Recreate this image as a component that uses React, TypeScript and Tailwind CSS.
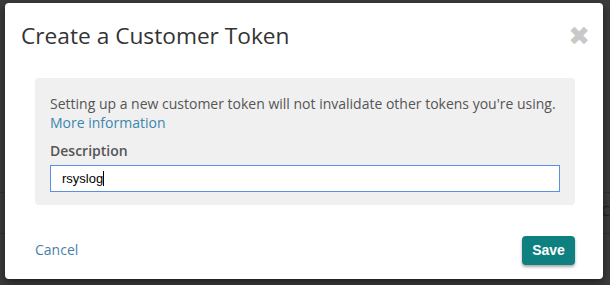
import React from "react";

export default function App() {
  return (
    <div className="relative w-[610px] h-[285px] overflow-hidden bg-[#3b3b3b] font-['Open_Sans',sans-serif]">
      {/* background page hints */}
      <div className="absolute left-0 right-0 top-[192px] h-px bg-[#2f2f2f]" />
      <div className="absolute left-0 right-0 top-[233px] h-px bg-[#2f2f2f]" />
      <div className="absolute right-0 top-[204px] text-[14px] text-[#222] leading-none">C</div>

      <div className="absolute left-[5px] top-[3px] w-[598px] h-[276px] bg-white rounded-[4px] shadow-[0_3px_9px_rgba(0,0,0,0.5)] flex flex-col">
        <div className="flex items-start justify-between pl-4 pr-4 pt-[17px]">
          <h1 className="text-[22.7px] leading-[32px] text-[#333]">Create a Customer Token</h1>
          <span className="text-[#c8c8c8] text-[26px] font-bold leading-none mt-[3px] mr-[-3px] font-['DejaVu_Sans',sans-serif]">✖</span>
        </div>

        <div className="ml-[30px] mr-[28px] mt-[26px] bg-[#f0f0f0] rounded-[4px] px-[15px] pt-[16px] pb-[13px]">
          <p className="text-[14px] leading-[19px] text-[#555]">
            Setting up a new customer token will not invalidate other tokens you're using.
          </p>
          <a className="block text-[14px] leading-[19px] text-[#3a87ad]">More information</a>
          <label className="block mt-[9px] text-[14px] font-semibold leading-[19px] text-[#555]">Description</label>
          <div className="mt-[5px] h-[27px] border border-[#5b8fe6] bg-white flex items-center pl-[11px] font-['Liberation_Sans',sans-serif] text-[13px] text-black">
            rsyslog<span className="w-px h-[15px] bg-black" />
          </div>
        </div>

        <div className="flex items-center justify-between ml-[30px] mr-[28px] mt-[31px]">
          <a className="text-[14px] text-[#4a7fa8] leading-[19px] -mt-[2px]">Cancel</a>
          <button className="h-[29px] w-[53px] rounded-[4px] bg-[#0e8080] text-white font-bold text-[14px] font-['Liberation_Sans',sans-serif] shadow-[0_2px_3px_rgba(0,0,0,0.35)]">
            Save
          </button>
        </div>
      </div>
    </div>
  );
}
